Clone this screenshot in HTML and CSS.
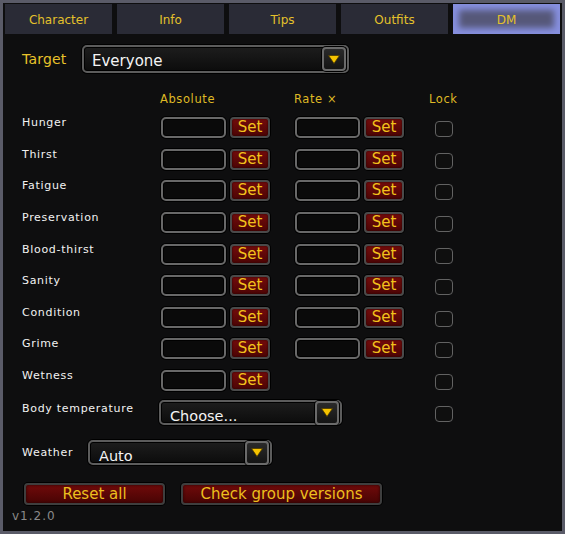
FILE: index.html
```html
<!DOCTYPE html>
<html>
<head>
<meta charset="utf-8">
<link rel="stylesheet" href="styles.css">
</head>
<body>
<div class="frame">
  <div class="tabs">
    <div class="tab">Character</div>
    <div class="tab">Info</div>
    <div class="tab">Tips</div>
    <div class="tab">Outfits</div>
    <div class="tab active">DM</div>
  </div>
  <div class="content">
    <div class="target-row">
      <span class="target-label">Target</span>
      <div class="dropdown dd-target">
        <span class="dd-text">Everyone</span>
        <span class="dd-btn"><svg width="12" height="9" viewBox="0 0 12 9"><path d="M0.5 0.5 H11.5 L6 8.5 Z" fill="#f6c400" stroke="#4a3800" stroke-width="0.8"/></svg></span>
      </div>
    </div>
    <div class="headers">
      <span class="h-abs">Absolute</span>
      <span class="h-rate">Rate ×</span>
      <span class="h-lock">Lock</span>
    </div>
    <div class="rows">
      <div class="row"><span class="label">Hunger</span><span class="input"></span><span class="set">Set</span><span class="input"></span><span class="set">Set</span><span class="check"></span></div>
      <div class="row"><span class="label">Thirst</span><span class="input"></span><span class="set">Set</span><span class="input"></span><span class="set">Set</span><span class="check"></span></div>
      <div class="row"><span class="label">Fatigue</span><span class="input"></span><span class="set">Set</span><span class="input"></span><span class="set">Set</span><span class="check"></span></div>
      <div class="row"><span class="label">Preservation</span><span class="input"></span><span class="set">Set</span><span class="input"></span><span class="set">Set</span><span class="check"></span></div>
      <div class="row"><span class="label">Blood-thirst</span><span class="input"></span><span class="set">Set</span><span class="input"></span><span class="set">Set</span><span class="check"></span></div>
      <div class="row"><span class="label">Sanity</span><span class="input"></span><span class="set">Set</span><span class="input"></span><span class="set">Set</span><span class="check"></span></div>
      <div class="row"><span class="label">Condition</span><span class="input"></span><span class="set">Set</span><span class="input"></span><span class="set">Set</span><span class="check"></span></div>
      <div class="row"><span class="label">Grime</span><span class="input"></span><span class="set">Set</span><span class="input"></span><span class="set">Set</span><span class="check"></span></div>
      <div class="row"><span class="label">Wetness</span><span class="input"></span><span class="set">Set</span><span class="check lock-col"></span></div>
    </div>
    <div class="row temp">
      <span class="label">Body temperature</span>
      <div class="dropdown dd-temp">
        <span class="dd-text low">Choose...</span>
        <span class="dd-btn"><svg width="12" height="9" viewBox="0 0 12 9"><path d="M0.5 0.5 H11.5 L6 8.5 Z" fill="#f6c400" stroke="#4a3800" stroke-width="0.8"/></svg></span>
      </div>
      <span class="check lock-col"></span>
    </div>
    <div class="weather-row">
      <span class="label weather-label">Weather</span>
      <div class="dropdown dd-weather">
        <span class="dd-text low">Auto</span>
        <span class="dd-btn"><svg width="12" height="9" viewBox="0 0 12 9"><path d="M0.5 0.5 H11.5 L6 8.5 Z" fill="#f6c400" stroke="#4a3800" stroke-width="0.8"/></svg></span>
      </div>
    </div>
    <div class="actions">
      <div class="btn btn-reset">Reset all</div>
      <div class="btn btn-check">Check group versions</div>
    </div>
    <div class="version">v1.2.0</div>
  </div>
</div>
</body>
</html>
```

FILE: styles.css
```css
body {
  margin: 0;
  background: #0e0e0f;
  font-family: "DejaVu Sans", "Liberation Sans", sans-serif;
}

.frame {
  width: 565px;
  height: 534px;
  box-sizing: border-box;
  border: 3px solid #5a5b68;
  background: #0e0e0f;
  overflow: hidden;
}

.tabs {
  display: flex;
  gap: 5px;
  padding: 1px 0 0 2px;
}

.tab {
  width: 107px;
  height: 30px;
  box-sizing: border-box;
  padding-top: 2px;
  background: #2a2b36;
  color: #e4c12b;
  font-size: 12px;
  display: flex;
  align-items: center;
  justify-content: center;
}

.tab.active {
  background: #565879;
  box-shadow: inset 0 0 6px 6px #8790e0;
}

.content {
  padding-left: 19px;
}

.target-row {
  display: flex;
  align-items: center;
  margin-top: 11px;
  height: 28px;
}

.target-label {
  width: 60px;
  color: #e8c22a;
  font-size: 14px;
  letter-spacing: 0.2px;
}

.dropdown {
  display: flex;
  align-items: center;
  box-sizing: border-box;
  border: 2px solid #5c5c5c;
  border-radius: 5px;
  background: linear-gradient(#1d1d1d, #0c0c0c);
  box-shadow: 0 0 0 1px #000, inset 0 0 0 1px #000;
  color: #f4f4f4;
}

.dd-target {
  width: 267px;
  height: 28px;
}

.dd-temp {
  grid-column: 2 / 6;
  justify-self: start;
  width: 183px;
  height: 25px;
  margin-left: -2px;
}

.dd-weather {
  width: 184px;
  height: 25px;
}

.dd-text {
  flex: 1;
  padding-left: 8px;
  padding-top: 3px;
  font-size: 15px;
  line-height: 18px;
}

.dd-text.low {
  font-size: 14.5px;
  padding-top: 6px;
  padding-left: 9px;
}

.dd-btn {
  width: 20px;
  height: 20px;
  border: 2px solid #6a6a6a;
  border-radius: 4px;
  background: linear-gradient(#2a2a2a, #141414);
  box-shadow: 0 0 0 1px #000;
  display: flex;
  align-items: center;
  justify-content: center;
  margin-right: 1px;
}

.headers {
  display: flex;
  margin-top: 19px;
  padding-left: 138px;
  color: #dfb925;
  font-size: 11.5px;
  line-height: 14px;
  letter-spacing: 0.6px;
}

.h-abs {
  width: 134px;
}

.h-rate {
  width: 135px;
}

.rows {
  display: flex;
  flex-direction: column;
  gap: 10.625px;
  margin-top: 11px;
}

.row {
  display: grid;
  grid-template-columns: 139px 65px 44px 90px 44px 49px;
  height: 21px;
  align-items: start;
  justify-items: end;
}

.label {
  justify-self: start;
  color: #f2f2f2;
  font-size: 11px;
  line-height: 14px;
  letter-spacing: 0.7px;
  margin-top: -1px;
}

.input {
  width: 65px;
  height: 21px;
  box-sizing: border-box;
  border: 2px solid #686868;
  border-radius: 5px;
  background: #0a0a0a;
  box-shadow: 0 0 0 1px #000, inset 0 0 0 1px #000;
}

.set {
  width: 40px;
  height: 21px;
  box-sizing: border-box;
  border: 2px solid #4a4a4a;
  border-radius: 4px;
  background: linear-gradient(#730b0b, #4c0404);
  box-shadow: 0 0 0 1px #000, inset 0 0 2px #200;
  color: #f2c21c;
  font-size: 15px;
  line-height: 17px;
  text-align: center;
}

.check {
  width: 18px;
  height: 16px;
  box-sizing: border-box;
  border: 1.5px solid #626262;
  border-radius: 4px;
  background: #0f0f0f;
  margin-top: 4px;
}

.lock-col {
  grid-column: 6;
}

.row.temp {
  margin-top: 9px;
  height: 25px;
}

.row.temp .label {
  margin-top: 2px;
}

.row.temp .check {
  margin-top: 6px;
}

.weather-row {
  display: flex;
  align-items: flex-start;
  margin-top: 15px;
}

.weather-label {
  width: 66px;
  margin-top: 6px;
}

.actions {
  display: flex;
  margin-top: 18px;
  padding-left: 2px;
}

.btn {
  height: 22px;
  box-sizing: border-box;
  border: 2px solid #3e3e3e;
  border-radius: 4px;
  background: linear-gradient(#700a0a, #480404);
  box-shadow: 0 0 0 1px #000, inset 0 0 3px #200;
  color: #ecbf1e;
  font-size: 15px;
  line-height: 18px;
  text-align: center;
}

.btn-reset {
  width: 141px;
}

.btn-check {
  width: 201px;
  margin-left: 16px;
}

.version {
  margin-top: 4px;
  margin-left: -10px;
  color: #8a8a8a;
  font-size: 12px;
  line-height: 14px;
  letter-spacing: 1px;
}
```
